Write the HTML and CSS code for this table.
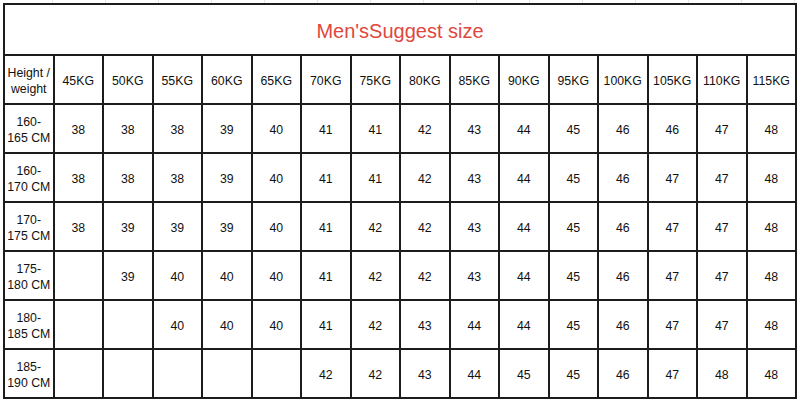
FILE: index.html
```html
<!DOCTYPE html>
<html>
<head>
<meta charset="utf-8">
<link rel="stylesheet" href="styles.css">
</head>
<body>
<div class="sheet">
<table class="size-table">
<colgroup>
<col span="16" class="col">
</colgroup>
<tr class="title-row"><td colspan="16" class="title">Men'sSuggest size</td></tr>
<tr class="row"><td>Height /<br>weight</td><td>45KG</td><td>50KG</td><td>55KG</td><td>60KG</td><td>65KG</td><td>70KG</td><td>75KG</td><td>80KG</td><td>85KG</td><td>90KG</td><td>95KG</td><td>100KG</td><td>105KG</td><td>110KG</td><td>115KG</td></tr>
<tr class="row"><td>160-<br>165 CM</td><td>38</td><td>38</td><td>38</td><td>39</td><td>40</td><td>41</td><td>41</td><td>42</td><td>43</td><td>44</td><td>45</td><td>46</td><td>46</td><td>47</td><td>48</td></tr>
<tr class="row"><td>160-<br>170 CM</td><td>38</td><td>38</td><td>38</td><td>39</td><td>40</td><td>41</td><td>41</td><td>42</td><td>43</td><td>44</td><td>45</td><td>46</td><td>47</td><td>47</td><td>48</td></tr>
<tr class="row"><td>170-<br>175 CM</td><td>38</td><td>39</td><td>39</td><td>39</td><td>40</td><td>41</td><td>42</td><td>42</td><td>43</td><td>44</td><td>45</td><td>46</td><td>47</td><td>47</td><td>48</td></tr>
<tr class="row"><td>175-<br>180 CM</td><td></td><td>39</td><td>40</td><td>40</td><td>40</td><td>41</td><td>42</td><td>42</td><td>43</td><td>44</td><td>45</td><td>46</td><td>47</td><td>47</td><td>48</td></tr>
<tr class="row"><td>180-<br>185 CM</td><td></td><td></td><td>40</td><td>40</td><td>40</td><td>41</td><td>42</td><td>43</td><td>44</td><td>44</td><td>45</td><td>46</td><td>47</td><td>47</td><td>48</td></tr>
<tr class="row"><td>185-<br>190 CM</td><td></td><td></td><td></td><td></td><td></td><td>42</td><td>42</td><td>43</td><td>44</td><td>45</td><td>45</td><td>46</td><td>47</td><td>48</td><td>48</td></tr>
</table>
</div>
</body>
</html>
```
FILE: styles.css
```css
html, body {
  margin: 0;
  padding: 0;
  background: #ffffff;
}
.sheet {
  width: 800px;
  height: 400px;
  padding: 3px 0 0 3px;
  box-sizing: border-box;
  background:
    repeating-linear-gradient(90deg, transparent 0 52px, #e6e6e6 52px 53px, transparent 53px 49.6px) top left / 100% 3px no-repeat,
    #ffffff;
}
.size-table {
  border-collapse: collapse;
  table-layout: fixed;
  width: 794px;
  font-family: "Liberation Sans", Arial, sans-serif;
  font-size: 12.3px;
  line-height: 15.5px;
  color: #111111;
}
.size-table td {
  border: 2px solid #1c1c1c;
  text-align: center;
  vertical-align: middle;
  padding: 4px 0 0 0;
}
.title-row {
  height: 51px;
}
.row {
  height: 49px;
}
.title {
  font-size: 20px;
  color: #e0473d;
}
```
